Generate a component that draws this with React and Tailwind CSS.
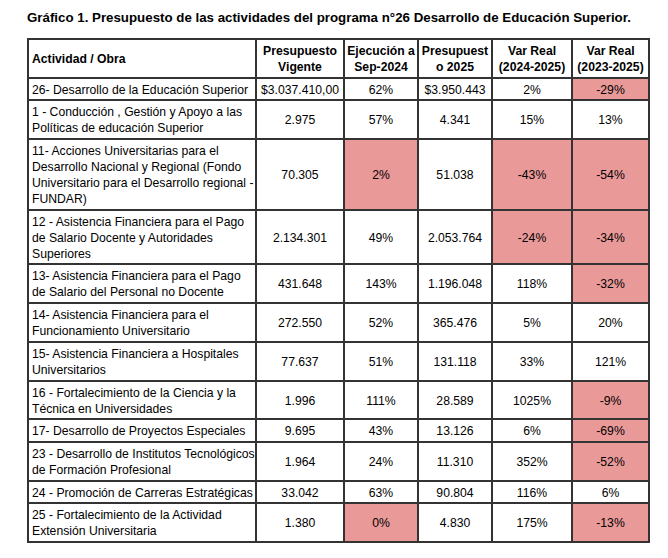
import React from "react";

const PINK = "bg-[#ea9999]";

const rows = [
  { a: ["26- Desarrollo de la Educación Superior"], v: ["$3.037.410,00", "62%", "$3.950.443", "2%", "-29%"], p: [4] },
  { a: ["1 - Conducción , Gestión y Apoyo a las", "Políticas de educación Superior"], v: ["2.975", "57%", "4.341", "15%", "13%"], p: [] },
  { a: ["11- Acciones Universitarias para el", "Desarrollo Nacional y Regional (Fondo", "Universitario para el Desarrollo regional -", "FUNDAR)"], v: ["70.305", "2%", "51.038", "-43%", "-54%"], p: [1, 3, 4] },
  { a: ["12 - Asistencia Financiera para el Pago", "de Salario Docente y Autoridades", "Superiores"], v: ["2.134.301", "49%", "2.053.764", "-24%", "-34%"], p: [3, 4] },
  { a: ["13- Asistencia Financiera para el Pago", "de Salario del Personal no Docente"], v: ["431.648", "143%", "1.196.048", "118%", "-32%"], p: [4] },
  { a: ["14- Asistencia Financiera para el", "Funcionamiento Universitario"], v: ["272.550", "52%", "365.476", "5%", "20%"], p: [] },
  { a: ["15- Asistencia Financiera a Hospitales", "Universitarios"], v: ["77.637", "51%", "131.118", "33%", "121%"], p: [] },
  { a: ["16 - Fortalecimiento de la Ciencia y la", "Técnica en Universidades"], v: ["1.996", "111%", "28.589", "1025%", "-9%"], p: [4] },
  { a: ["17- Desarrollo de Proyectos Especiales"], v: ["9.695", "43%", "13.126", "6%", "-69%"], p: [4] },
  { a: ["23 - Desarrollo de Institutos Tecnológicos", "de Formación Profesional"], v: ["1.964", "24%", "11.310", "352%", "-52%"], p: [4] },
  { a: ["24 - Promoción de Carreras Estratégicas"], v: ["33.042", "63%", "90.804", "116%", "6%"], p: [] },
  { a: ["25 - Fortalecimiento de la Actividad", "Extensión Universitaria"], v: ["1.380", "0%", "4.830", "175%", "-13%"], p: [1, 4] },
];

const cellBase = "border-2 border-[#333333] pt-[3px] pb-[1.7px] align-middle";

export default function App() {
  return (
    <div
      className="w-[668px] h-[558px] bg-white text-black"
      style={{ fontFamily: '"Liberation Sans", Arial, sans-serif' }}
    >
      <div className="pl-[27px] pt-[10px] h-[38px] text-[13.3px] font-bold leading-[16px] whitespace-nowrap">
        Gráfico 1. Presupuesto de las actividades del programa n°26 Desarrollo de Educación Superior.
      </div>
      <table className="ml-[27px] table-fixed border-collapse border-2 border-[#333333] text-[12.2px] leading-[16px] w-[621px]">
        <colgroup>
          <col className="w-[228px]" />
          <col className="w-[88px]" />
          <col className="w-[74px]" />
          <col className="w-[74px]" />
          <col className="w-[80px]" />
          <col className="w-[77px]" />
        </colgroup>
        <thead>
          <tr className="font-bold">
            <th className={`${cellBase} text-left pl-[3px] font-bold`}>Actividad / Obra</th>
            <th className={`${cellBase} text-center font-bold`}>Presupuesto<br />Vigente</th>
            <th className={`${cellBase} text-center font-bold whitespace-nowrap`}>Ejecución a<br />Sep-2024</th>
            <th className={`${cellBase} text-center font-bold`}>Presupuest<br />o 2025</th>
            <th className={`${cellBase} text-center font-bold whitespace-nowrap`}>Var Real<br />(2024-2025)</th>
            <th className={`${cellBase} text-center font-bold whitespace-nowrap`}>Var Real<br />(2023-2025)</th>
          </tr>
        </thead>
        <tbody>
          {rows.map((r, i) => (
            <tr key={i}>
              <td className={`${cellBase} text-left pl-[3px] pr-[2px] whitespace-nowrap`}>
                {r.a.map((l, j) => (
                  <div key={j}>{l}</div>
                ))}
              </td>
              {r.v.map((v, j) => (
                <td
                  key={j}
                  className={`${cellBase} text-center whitespace-nowrap ${r.p.includes(j) ? PINK : ""}`}
                >
                  {v}
                </td>
              ))}
            </tr>
          ))}
        </tbody>
      </table>
    </div>
  );
}
